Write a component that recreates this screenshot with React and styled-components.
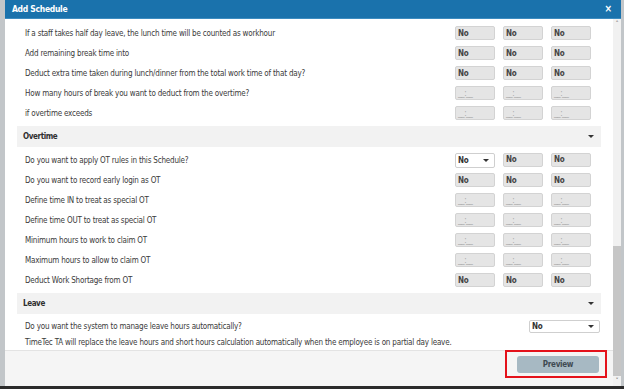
import React from 'react';
import styled, { createGlobalStyle } from 'styled-components';

const GlobalStyle = createGlobalStyle`
  html, body {
    margin: 0;
    padding: 0;
    background: #c2c6c9;
    font-family: "DejaVu Sans Condensed", "Liberation Sans", sans-serif;
    overflow: hidden;
  }
`;

const Page = styled.div`
  height: 389px;
  display: flex;
  flex-direction: column;
`;

const Modal = styled.div`
  margin-left: 5px;
  width: 616px;
  height: 386px;
  background: #fff;
  display: flex;
  flex-direction: column;
`;

const BottomEdge = styled.div`
  height: 3px;
  background: #2b2b2b;
`;

const Header = styled.div`
  height: 19px;
  background: #1a72ac;
  border-bottom: 1px solid #3d8cc0;
  box-sizing: border-box;
  display: flex;
  align-items: center;
  justify-content: space-between;
  padding: 0 9px 0 7px;
  color: #fff;
`;

const Title = styled.div`
  font-size: 8.5px;
  font-weight: bold;
  letter-spacing: -0.3px;
`;

const Close = styled.div`
  font-size: 10px;
  font-weight: bold;
  line-height: 1;
`;

const Content = styled.div`
  flex: 1;
  display: flex;
  min-height: 0;
`;

const Main = styled.div`
  flex: 1;
  display: flex;
  flex-direction: column;
`;

const Scroll = styled.div`
  flex: 1;
  padding: 4px 12px 0 12px;
  overflow: hidden;
`;

const Section = styled.div`
  padding-bottom: 3px;
`;

const SectionHead = styled.div`
  height: 21px;
  background: #f2f2f2;
  display: flex;
  align-items: center;
  justify-content: space-between;
  padding: 0 7px 0 6px;
  font-size: 8px;
  font-weight: bold;
  letter-spacing: -0.4px;
  color: #2f2f2f;
  margin-bottom: 3px;
`;

const Caret = styled.span`
  width: 0;
  height: 0;
  border-left: 3px solid transparent;
  border-right: 3px solid transparent;
  border-top: 3px solid ${p => p.color || '#333'};
`;

const Row = styled.div`
  height: ${p => p.h || 20}px;
  display: flex;
  align-items: center;
  padding: 0 ${p => p.pr ?? 10}px 0 8px;
`;

const Label = styled.div`
  flex: 1;
  font-size: 8px;
  letter-spacing: -0.2px;
  color: #3a3a3a;
  white-space: nowrap;
`;

const Inputs = styled.div`
  display: flex;
  gap: 8px;
`;

const Field = styled.div`
  width: 40px;
  height: 14px;
  box-sizing: border-box;
  background: #e5e5e5;
  border: 1px solid #d3d3d3;
  border-radius: 2px;
  display: flex;
  align-items: center;
  padding: 0 2px;
  font-size: 8px;
  font-weight: bold;
  letter-spacing: -0.3px;
  color: #444;
`;

const Time = styled.span`
  color: #a8a8a8;
  font-weight: normal;
  font-size: 8px;
  letter-spacing: -0.5px;
`;

const Select = styled.div`
  width: ${p => p.w || 40}px;
  height: ${p => p.ht || 15}px;
  box-sizing: border-box;
  background: #fff;
  border: 1px solid #cfcfcf;
  border-radius: 2px;
  display: flex;
  align-items: center;
  justify-content: space-between;
  padding: 0 5px 0 2px;
  font-size: 8px;
  font-weight: bold;
  letter-spacing: -0.3px;
  color: #333;
`;

const Note = styled.div`
  font-size: 8px;
  letter-spacing: -0.2px;
  color: #3a3a3a;
  padding: 0 8px;
  margin-top: 3px;
  height: 10px;
  line-height: 10px;
  white-space: nowrap;
`;

const Footer = styled.div`
  height: 36px;
  box-sizing: border-box;
  border-top: 1px solid #e3e3e3;
  background: #f5f5f5;
  display: flex;
  justify-content: flex-end;
  align-items: flex-start;
  padding-right: 6px;
`;

const Highlight = styled.div`
  border: 2px solid #e4121b;
  padding: 4px 6px 3px 10px;
  margin-top: -1px;
`;

const PreviewButton = styled.div`
  width: 82px;
  height: 17px;
  background: #a7b9c3;
  border-radius: 3px;
  display: flex;
  align-items: center;
  justify-content: center;
  font-size: 8px;
  font-weight: bold;
  letter-spacing: -0.3px;
  color: #3e4a52;
`;

const Scrollbar = styled.div`
  width: 8px;
  background: #f1f1f1;
  display: flex;
  flex-direction: column;
  align-items: center;
  justify-content: space-between;
  font-size: 7px;
  color: #555;
`;

const Arrow = styled.div`
  height: 10px;
  line-height: 10px;
`;

const Thumb = styled.div`
  width: 8px;
  height: 130px;
  background: #c6c6c6;
`;

const ThumbArea = styled.div`
  flex: 1;
  width: 8px;
  display: flex;
  flex-direction: column;
  justify-content: flex-end;
`;

const no3 = ['No', 'No', 'No'];
const time3 = ['t', 't', 't'];

const topRows = [
  ['If a staff takes half day leave, the lunch time will be counted as workhour', no3],
  ['Add remaining break time into', no3],
  ['Deduct extra time taken during lunch/dinner from the total work time of that day?', no3],
  ['How many hours of break you want to deduct from the overtime?', time3],
  ['if overtime exceeds', time3],
];

const otRows = [
  ['Do you want to apply OT rules in this Schedule?', ['sel', 'No', 'No']],
  ['Do you want to record early login as OT', no3],
  ['Define time IN to treat as special OT', time3],
  ['Define time OUT to treat as special OT', time3],
  ['Minimum hours to work to claim OT', time3],
  ['Maximum hours to allow to claim OT', time3],
  ['Deduct Work Shortage from OT', no3],
];

function Cell({ v }) {
  if (v === 'sel') {
    return (
      <Select>
        No <Caret />
      </Select>
    );
  }
  return <Field>{v === 't' ? <Time>__:__</Time> : v}</Field>;
}

function SettingRow({ label, values }) {
  return (
    <Row>
      <Label>{label}</Label>
      <Inputs>
        {values.map((v, i) => <Cell key={i} v={v} />)}
      </Inputs>
    </Row>
  );
}

export default function App() {
  return (
    <Page>
      <GlobalStyle />
      <Modal>
        <Header>
          <Title>Add Schedule</Title>
          <Close>×</Close>
        </Header>
        <Content>
          <Main>
            <Scroll>
              <Section>
                {topRows.map(([l, v]) => <SettingRow key={l} label={l} values={v} />)}
              </Section>
              <Section>
                <SectionHead>Overtime <Caret /></SectionHead>
                {otRows.map(([l, v]) => <SettingRow key={l} label={l} values={v} />)}
              </Section>
              <Section>
                <SectionHead>Leave <Caret /></SectionHead>
                <Row h={18} pr={1}>
                  <Label>Do you want the system to manage leave hours automatically?</Label>
                  <Select w={71} ht={13}>No <Caret /></Select>
                </Row>
                <Note>TimeTec TA will replace the leave hours and short hours calculation automatically when the employee is on partial day leave.</Note>
              </Section>
            </Scroll>
            <Footer>
              <Highlight>
                <PreviewButton>Preview</PreviewButton>
              </Highlight>
            </Footer>
          </Main>
          <Scrollbar>
            <Arrow>˄</Arrow>
            <ThumbArea>
              <Thumb />
            </ThumbArea>
            <Arrow>˅</Arrow>
          </Scrollbar>
        </Content>
      </Modal>
      <BottomEdge />
    </Page>
  );
}
